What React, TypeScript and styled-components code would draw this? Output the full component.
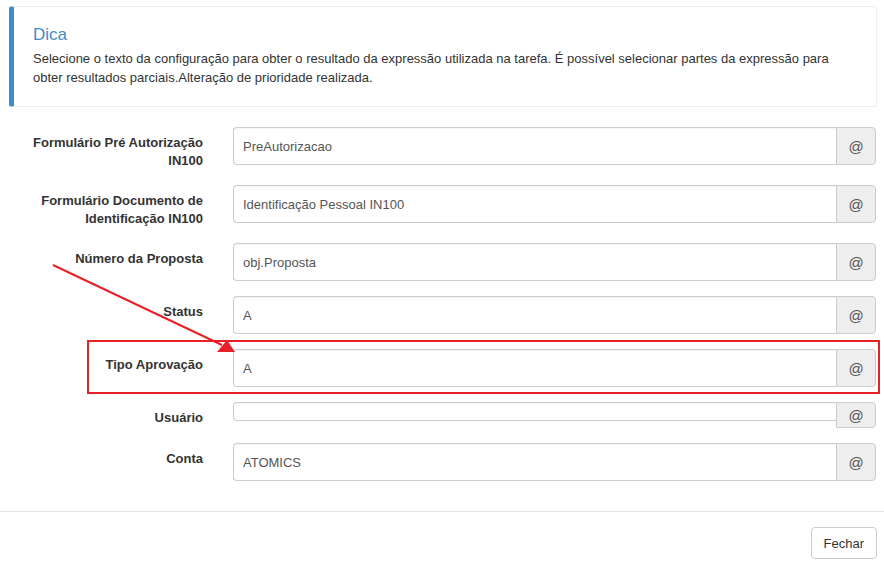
import React from "react";
import styled, { createGlobalStyle } from "styled-components";

const Global = createGlobalStyle`
  html, body { margin: 0; padding: 0; background: #fff; }
  body { font-family: "Liberation Sans", Arial, sans-serif; }
  * { box-sizing: border-box; }
`;

const Page = styled.div`
  position: relative;
  width: 884px;
  height: 569px;
  overflow: hidden;
  background: #fff;
  font-family: "Liberation Sans", Arial, sans-serif;
  padding-top: 6px;
`;

const Callout = styled.div`
  margin: 0 7px 0 9px;
  border: 1px solid #eee;
  border-left: 5px solid #428bca;
  border-radius: 3px;
  padding: 18px 20px 19px 19px;
`;

const CalloutTitle = styled.h4`
  margin: 0 0 4px 0;
  font-size: 17px;
  font-weight: 400;
  line-height: 20px;
  color: #428bca;
`;

const CalloutText = styled.p`
  margin: 0;
  font-size: 13px;
  line-height: 19px;
  color: #333;
`;

const Form = styled.div`
  padding: 20px 8px 30px 20px;
`;

const Row = styled.div`
  display: grid;
  grid-template-columns: 183px 1fr;
  column-gap: 30px;
  margin-bottom: 15px;
  &:last-child { margin-bottom: 0; }
`;

const Label = styled.label`
  text-align: right;
  font-size: 13px;
  font-weight: 700;
  line-height: 18px;
  color: #333;
  padding-top: 7px;
`;

const InputGroup = styled.div`
  display: flex;
  align-items: flex-start;
`;

const Input = styled.div<{ $short?: boolean }>`
  flex: 1;
  height: ${(p) => (p.$short ? "19px" : "38px")};
  border: 1px solid #ccc;
  border-right: none;
  border-radius: 4px 0 0 4px;
  padding: 0 9px;
  display: flex;
  align-items: center;
  font-size: 13px;
  color: #555;
  box-shadow: inset 0 1px 1px rgba(0, 0, 0, 0.04);
`;

const Addon = styled.span<{ $short?: boolean }>`
  width: 40px;
  height: ${(p) => (p.$short ? "26px" : "38px")};
  border: 1px solid #ccc;
  border-radius: 0 4px 4px 0;
  background: #eee;
  display: flex;
  align-items: center;
  justify-content: center;
  font-size: 15px;
  color: #555;
`;

const Footer = styled.div`
  border-top: 1px solid #e5e5e5;
  padding: 15px 7px 15px 15px;
  display: flex;
  justify-content: flex-end;
`;

const Button = styled.button`
  height: 32px;
  padding: 0 12px;
  background: #fff;
  border: 1px solid #ccc;
  border-radius: 4px;
  font-family: "Liberation Sans", Arial, sans-serif;
  font-size: 13px;
  color: #333;
`;

const Highlight = styled.div`
  position: absolute;
  left: 87px;
  top: 340px;
  width: 793px;
  height: 54px;
  border: 2px solid #e8202a;
  pointer-events: none;
`;

const ArrowSvg = styled.svg`
  position: absolute;
  left: 0;
  top: 0;
  pointer-events: none;
`;

const fields: { label: string; value: string; short?: boolean }[] = [
  { label: "Formulário Pré Autorização IN100", value: "PreAutorizacao" },
  { label: "Formulário Documento de Identificação IN100", value: "Identificação Pessoal IN100" },
  { label: "Número da Proposta", value: "obj.Proposta" },
  { label: "Status", value: "A" },
  { label: "Tipo Aprovação", value: "A" },
  { label: "Usuário", value: "", short: true },
  { label: "Conta", value: "ATOMICS" },
];

export default function App() {
  return (
    <>
      <Global />
      <Page>
        <Callout>
          <CalloutTitle>Dica</CalloutTitle>
          <CalloutText>
            Selecione o texto da configuração para obter o resultado da expressão utilizada na tarefa. É possível
            selecionar partes da expressão para obter resultados parciais.Alteração de prioridade realizada.
          </CalloutText>
        </Callout>
        <Form>
          {fields.map((f) => (
            <Row key={f.label}>
              <Label>{f.label}</Label>
              <InputGroup>
                <Input $short={f.short}>{f.value}</Input>
                <Addon $short={f.short}>@</Addon>
              </InputGroup>
            </Row>
          ))}
        </Form>
        <Footer>
          <Button>Fechar</Button>
        </Footer>
        <Highlight />
        <ArrowSvg width="884" height="569" viewBox="0 0 884 569">
          <line x1="53" y1="265" x2="222" y2="345" stroke="#e8202a" strokeWidth="2" />
          <polygon points="217,352 235,352 227,340" fill="#e8202a" />
        </ArrowSvg>
      </Page>
    </>
  );
}
